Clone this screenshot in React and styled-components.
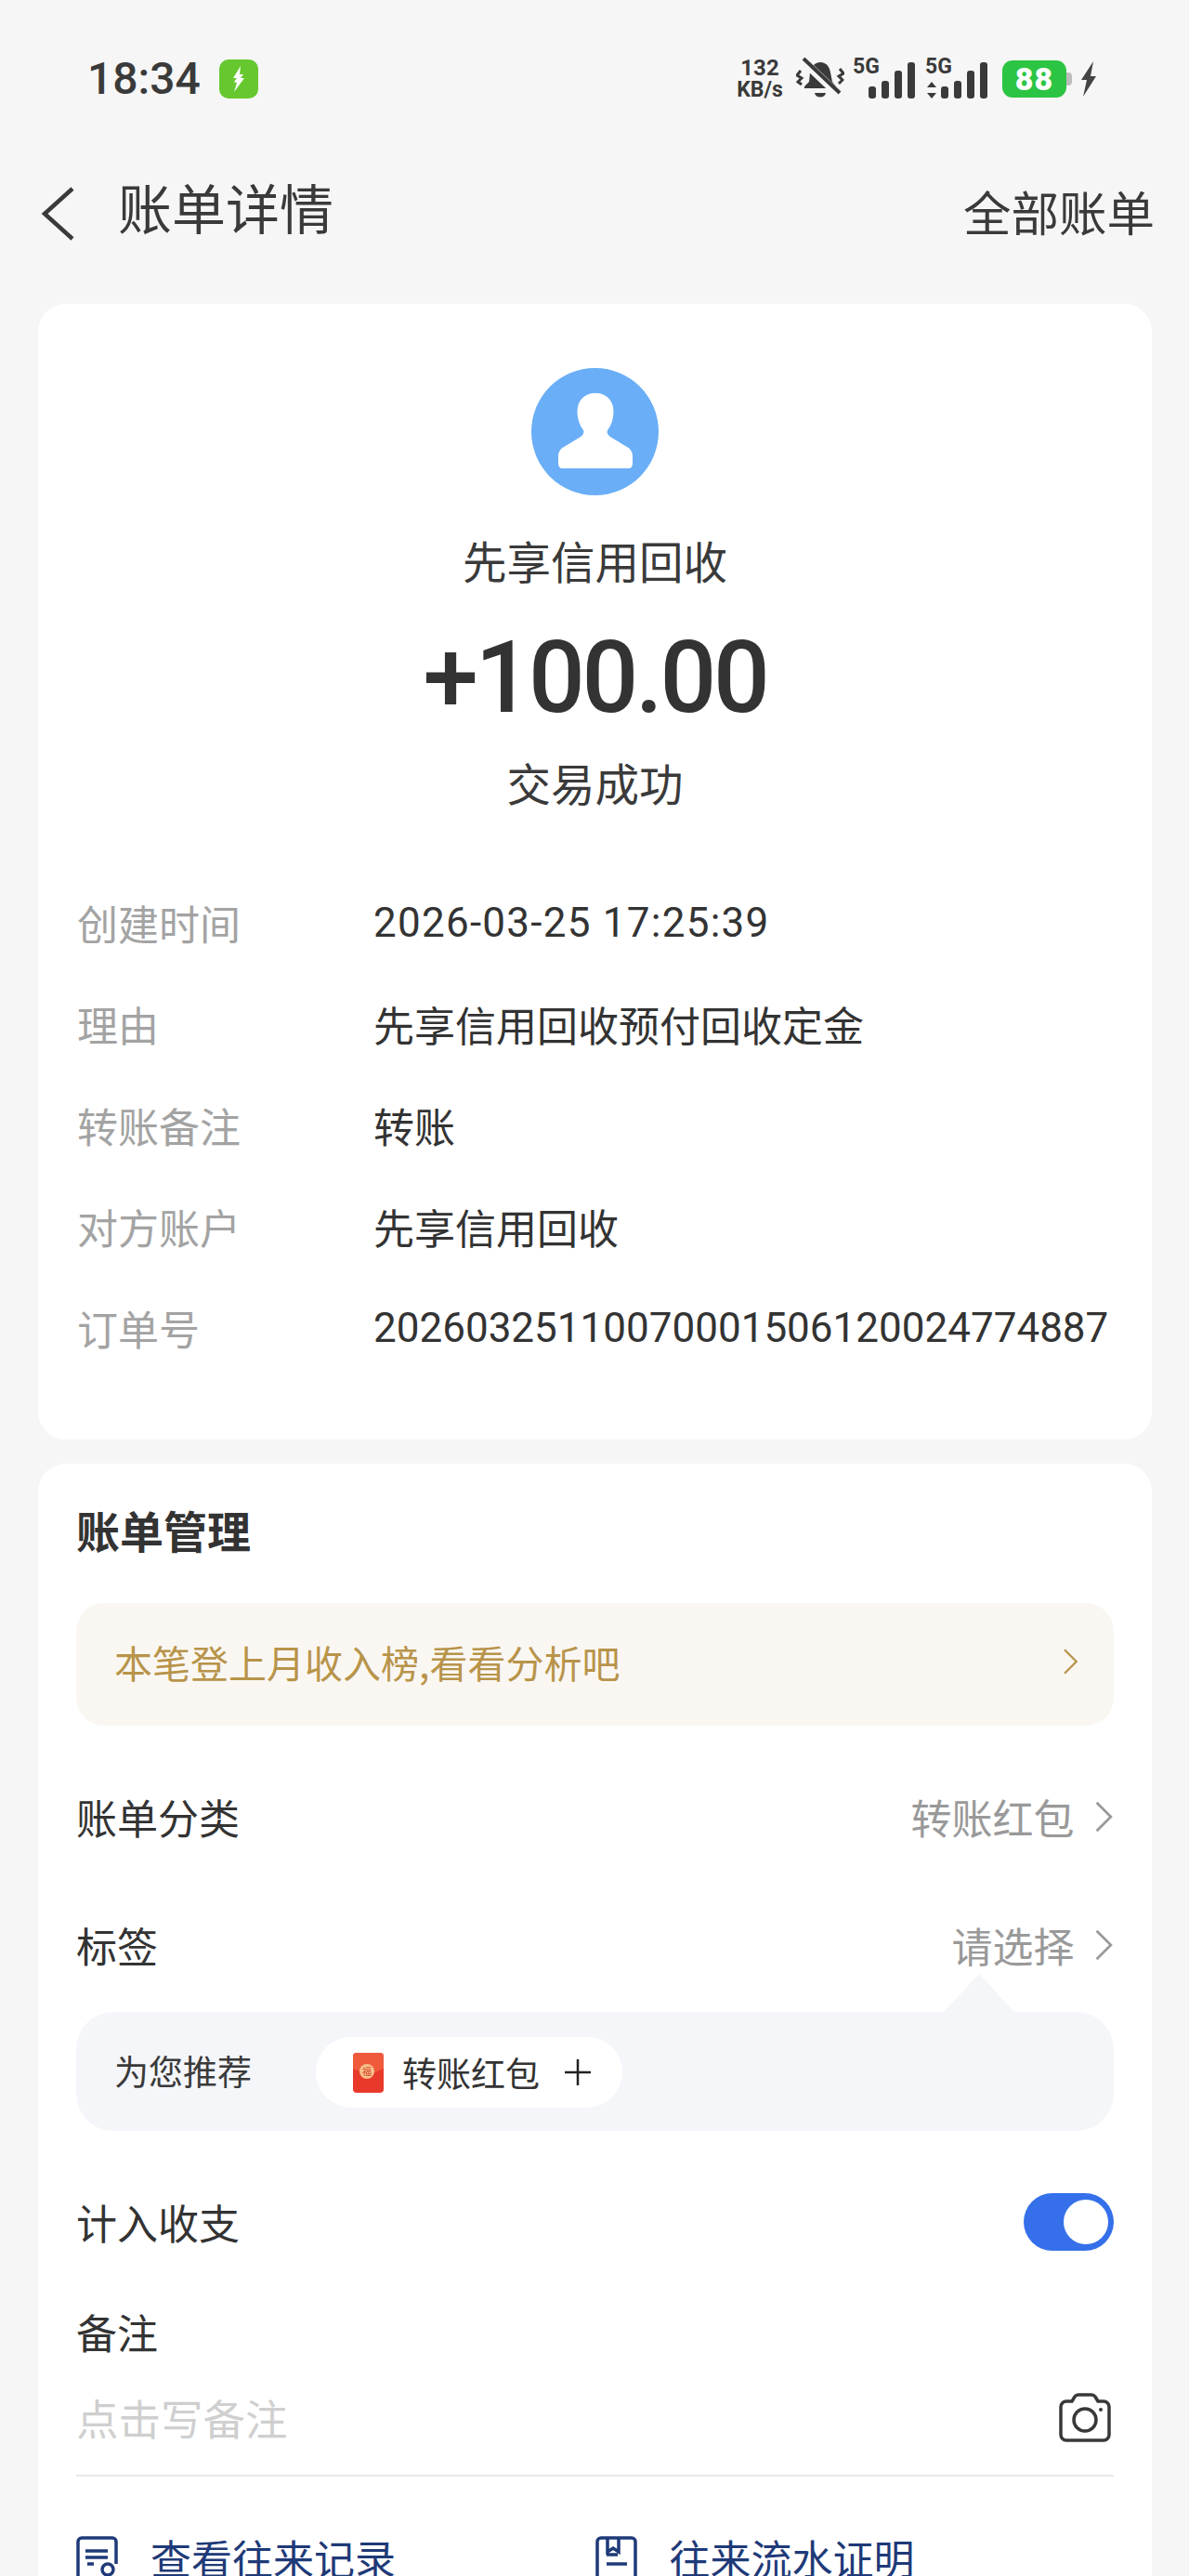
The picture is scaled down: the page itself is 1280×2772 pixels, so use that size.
import React from "react";
import styled, { createGlobalStyle } from "styled-components";

const GlobalStyle = createGlobalStyle`
    html, body {
        margin: 0;
        padding: 0;
        background: #f6f6f6;
    }
    * {
        box-sizing: border-box;
    }
`;

const CJK = `"Noto Sans CJK SC", sans-serif`;
const NUM = `Roboto, "Noto Sans CJK SC", sans-serif`;

// whole phone screen
const Page = styled.div`
    width: 1280px;
    height: 2772px;
    overflow: hidden;
    background: #f6f6f6;
    font-family: ${CJK};
    color: #333;
`;

// status bar
const StatusBar = styled.div`
    height: 170px;
    display: flex;
    align-items: center;
    justify-content: space-between;
    padding: 0 99px 0 94px;
`;

const StatusLeft = styled.div`
    display: flex;
    align-items: center;
    gap: 20px;
`;

const Clock = styled.div`
    font-family: ${NUM};
    font-size: 48px;
    font-weight: 500;
    line-height: 48px;
    color: #3a3a3a;
`;

const ChargeBadge = styled.div`
    width: 42px;
    height: 42px;
    border-radius: 10px;
    background: #66c82e;
    display: flex;
    align-items: center;
    justify-content: center;
`;

const StatusRight = styled.div`
    display: flex;
    align-items: center;
`;

const Speed = styled.div`
    width: 52px;
    margin-right: 13px;
    font-family: ${NUM};
    font-weight: 700;
    color: #3a3a3a;
    text-align: center;
    line-height: 23px;
    font-size: 23px;

    div:first-child {
        font-size: 24px;
    }
`;

const SignalBox = styled.div`
    position: relative;
    width: 67px;
    height: 46px;
    margin-left: ${(p) => p.$left}px;
`;

const FiveG = styled.span`
    position: absolute;
    top: 0;
    left: 0;
    font-family: ${NUM};
    font-weight: 700;
    font-size: 23px;
    line-height: 20px;
    color: #3a3a3a;
`;

const BarsSvg = styled.svg`
    position: absolute;
    left: 0;
    top: 0;
`;

const Battery = styled.div`
    width: 69px;
    height: 40px;
    margin-left: 16px;
    border-radius: 11px;
    background: #2cc443;
    color: #fff;
    font-family: ${NUM};
    font-weight: 900;
    font-size: 34px;
    line-height: 40px;
    text-align: center;
    letter-spacing: 1px;
`;

const BatteryNub = styled.div`
    width: 6px;
    height: 14px;
    border-radius: 0 4px 4px 0;
    background: #bdbdbd;
`;

const BoltSvg = styled.svg`
    margin-left: 9px;
`;

// title bar
const NavBar = styled.div`
    height: 110px;
    display: flex;
    align-items: center;
    justify-content: space-between;
    padding: 0 37px 0 44px;
`;

const NavLeft = styled.div`
    display: flex;
    align-items: center;
    gap: 47px;
`;

const BackSvg = styled.svg`
    margin-top: 9px;
`;

const NavTitle = styled.div`
    font-size: 58px;
    line-height: 70px;
    margin-bottom: 6px;
    color: #3a3a3a;
`;

const NavLink = styled.div`
    font-size: 51.5px;
    line-height: 60px;
    margin-top: 4px;
    color: #3a3a3a;
`;

const Card = styled.div`
    margin: ${(p) => p.$top}px 40px 0 41px;
    background: #fff;
    border-radius: 30px;
`;

const SummaryCard = styled(Card)`
    height: 1222px;
    padding-top: 69px;
    display: flex;
    flex-direction: column;
`;

const Avatar = styled.div`
    align-self: center;
    width: 137px;
    height: 137px;
    border-radius: 50%;
    background: #6aaef7;
    display: flex;
    align-items: center;
    justify-content: center;
`;

const Center = styled.div`
    text-align: center;
    font-size: 47.5px;
    line-height: 60px;
    color: #3a3a3a;
    margin-top: ${(p) => p.$top}px;
`;

const Amount = styled.div`
    text-align: center;
    font-family: ${NUM};
    font-weight: 500;
    font-size: 107px;
    line-height: 120px;
    letter-spacing: -3.3px;
    margin-top: 37px;
    color: #333;
`;

const DetailList = styled.div`
    margin-top: 66px;
    padding: 0 42px;
    display: flex;
    flex-direction: column;
`;

const DetailRow = styled.div`
    height: 109px;
    display: flex;
    align-items: center;
`;

const DetailLabel = styled.div`
    width: 319px;
    flex: none;
    font-size: 44px;
    color: #a3a3a3;
`;

const DetailValue = styled.div`
    font-family: ${NUM};
    font-size: 44px;
    letter-spacing: ${(p) => (p.$wide ? "1.25px" : "0")};
    color: #333;
    white-space: nowrap;
`;

const ManageCard = styled(Card)`
    padding: 0 41px;
    height: 1300px;
`;

const ManageTitle = styled.div`
    height: 150px;
    padding-bottom: 10px;
    display: flex;
    align-items: center;
    font-size: 47px;
    font-weight: 700;
    color: #333;
`;

const Banner = styled.div`
    height: 132px;
    padding: 0 38px 6px 41px;
    border-radius: 30px;
    background: #faf7f3;
    display: flex;
    align-items: center;
    justify-content: space-between;
    font-size: 41px;
    color: #b8944a;
`;

const Row = styled.div`
    height: ${(p) => p.$height}px;
    margin-top: ${(p) => p.$top || 0}px;
    display: flex;
    align-items: center;
    justify-content: space-between;
    font-size: 44px;
    color: #333;
`;

const RowValue = styled.div`
    display: flex;
    align-items: center;
    gap: 21px;
    color: #999;
`;

const SuggestPanel = styled.div`
    position: relative;
    height: 128px;
    margin-top: 32px;
    padding: 0 0 3px 41px;
    border-radius: 40px;
    background: #f5f6fa;
    display: flex;
    align-items: center;
    gap: 69px;
    font-size: 37px;
    color: #3a3a3a;

    &::before {
        content: "";
        position: absolute;
        top: -41px;
        left: 934px;
        border: 38px solid transparent;
        border-top: 0;
        border-bottom: 41px solid #f5f6fa;
    }
`;

const SuggestChip = styled.div`
    height: 76px;
    width: 330px;
    margin-top: 5px;
    border-radius: 38px;
    background: #fff;
    display: flex;
    align-items: center;
    padding-left: 40px;
    color: #333;
`;

const ChipText = styled.span`
    margin: 0 27px 0 20px;
`;

const Toggle = styled.div`
    width: 97px;
    height: 62px;
    border-radius: 31px;
    background: #3570ea;
    display: flex;
    align-items: center;
    justify-content: flex-end;
    padding-right: 6px;
`;

const ToggleThumb = styled.div`
    width: 48px;
    height: 48px;
    border-radius: 50%;
    background: #fff;
`;

const NoteLabel = styled.div`
    height: 60px;
    margin-top: 57px;
    display: flex;
    align-items: center;
    font-size: 44px;
    color: #333;
`;

const NoteInput = styled.div`
    height: 126px;
    display: flex;
    align-items: center;
    justify-content: space-between;
    padding-right: 3px;
    border-bottom: 2px solid #e9e9e9;
    font-size: 45.5px;
    color: #cfcfcf;
`;

const Links = styled.div`
    display: flex;
    padding-top: 59px;
`;

const LinkItem = styled.div`
    width: 559px;
    display: flex;
    align-items: flex-start;
    gap: 35px;
    font-size: 44px;
    line-height: 56px;
    color: #1f3a78;
`;

const LinkIcon = styled.svg`
    flex: none;
    margin-top: 5px;
`;

const Chevron = ({ size = 36, color = "#999" }) => (
    <svg width={size * 0.6} height={size} viewBox="0 0 12 20" fill="none">
        <path d="M2 1.5 10.5 10 2 18.5" stroke={color} strokeWidth="1.5" />
    </svg>
);

const SignalBars = ({ arrows }) => (
    <BarsSvg width="67" height="46" viewBox="0 0 67 46">
        {arrows && <path d="M7 26 12 32H2ZM7 44 2 38H12Z" fill="#3a3a3a" />}
        <rect x="17" y="31" width="8" height="13" rx="3" fill="#3a3a3a" />
        <rect x="31" y="25" width="8" height="19" rx="3" fill="#3a3a3a" />
        <rect x="45" y="14" width="8" height="30" rx="3" fill="#3a3a3a" />
        <rect x="59" y="5" width="8" height="39" rx="3" fill="#3a3a3a" />
    </BarsSvg>
);

const details = [
    { label: "创建时间", value: "2026-03-25 17:25:39", wide: true },
    { label: "理由", value: "先享信用回收预付回收定金" },
    { label: "转账备注", value: "转账" },
    { label: "对方账户", value: "先享信用回收" },
    { label: "订单号", value: "20260325110070001506120024774887" },
];

export default function App() {
    return (
        <Page>
            <GlobalStyle />
            <StatusBar>
                <StatusLeft>
                    <Clock>18:34</Clock>
                    <ChargeBadge>
                        <svg width="16" height="28" viewBox="0 0 16 28">
                            <path d="M10 0 2 13h4L3 17l-1 0 4 1-3 10 11-15h-4l3-4H9z" fill="#fff" />
                        </svg>
                    </ChargeBadge>
                </StatusLeft>
                <StatusRight>
                    <Speed>
                        <div>132</div>
                        <div>KB/s</div>
                    </Speed>
                    <svg width="52" height="46" viewBox="0 0 52 46">
                        <path d="M26 5c7 0 10 5 11 11l2 10 4 5v2H9v-2l5-5 1-10c1-6 5-11 11-11z" fill="#3a3a3a" />
                        <path d="M20 38h12c-1 6-11 6-12 0z" fill="#3a3a3a" />
                        <path d="M7 3 46 40" stroke="#f6f6f6" strokeWidth="9" />
                        <path d="M8 1 47 38" stroke="#3a3a3a" strokeWidth="4" />
                        <path d="M5 14 1 19l5 3-4 4 4 3M47 12l4 5-5 3 4 4-4 4" stroke="#3a3a3a" strokeWidth="3" fill="none" />
                    </svg>
                    <SignalBox $left={9}>
                        <FiveG>5G</FiveG>
                        <SignalBars />
                    </SignalBox>
                    <SignalBox $left={11}>
                        <FiveG>5G</FiveG>
                        <SignalBars arrows />
                    </SignalBox>
                    <Battery>88</Battery>
                    <BatteryNub />
                    <BoltSvg width="18" height="38" viewBox="0 0 18 38">
                        <path d="M14 0 1 20h6L3 38l14-22h-6z" fill="#444" />
                    </BoltSvg>
                </StatusRight>
            </StatusBar>

            <NavBar>
                <NavLeft>
                    <BackSvg width="36" height="58" viewBox="0 0 36 58" fill="none">
                        <path d="M34 2 4 29l30 27" stroke="#3a3a3a" strokeWidth="4.5" />
                    </BackSvg>
                    <NavTitle>账单详情</NavTitle>
                </NavLeft>
                <NavLink>全部账单</NavLink>
            </NavBar>

            <SummaryCard $top={47}>
                <Avatar>
                    <svg width="80" height="84" viewBox="0 0 80 84">
                        <path
                            d="M40 0C52 0 59.5 8 59.5 20 59.5 29 56 36 53 40 52 42 53 45 56 47L74 58C78 60 80 64 80 68V76C80 79 78 81 76 81H4C2 81 0 79 0 76V68C0 64 2 60 6 58L24 47C27 45 28 42 27 40 24 36 20.5 29 20.5 20 20.5 8 28 0 40 0Z"
                            fill="#fff"
                        />
                    </svg>
                </Avatar>
                <Center $top={40}>先享信用回收</Center>
                <Amount>+100.00</Amount>
                <Center $top={22}>交易成功</Center>
                <DetailList>
                    {details.map((d) => (
                        <DetailRow key={d.label}>
                            <DetailLabel>{d.label}</DetailLabel>
                            <DetailValue $wide={d.wide}>{d.value}</DetailValue>
                        </DetailRow>
                    ))}
                </DetailList>
            </SummaryCard>

            <ManageCard $top={26}>
                <ManageTitle>账单管理</ManageTitle>
                <Banner>
                    <span>本笔登上月收入榜,看看分析吧</span>
                    <Chevron size={30} color="#b8944a" />
                </Banner>
                <Row $height={196}>
                    <span>账单分类</span>
                    <RowValue>
                        转账红包
                        <Chevron />
                    </RowValue>
                </Row>
                <Row $height={80}>
                    <span>标签</span>
                    <RowValue>
                        请选择
                        <Chevron />
                    </RowValue>
                </Row>
                <SuggestPanel>
                    <span>为您推荐</span>
                    <SuggestChip>
                        <svg width="33" height="43" viewBox="0 0 33 43">
                            <rect width="33" height="43" rx="4" fill="#e8392b" />
                            <path d="M0 4a4 4 0 0 1 4-4h25a4 4 0 0 1 4 4v13L17 24 0 17z" fill="#ef5a3c" />
                            <circle cx="15" cy="20" r="8" fill="#f6c08a" />
                            <text x="15" y="24" fontSize="10" textAnchor="middle" fill="#d8432c" fontFamily={CJK}>
                                福
                            </text>
                        </svg>
                        <ChipText>转账红包</ChipText>
                        <svg width="28" height="28" viewBox="0 0 28 28">
                            <path d="M14 0v28M0 14h28" stroke="#222" strokeWidth="2.5" />
                        </svg>
                    </SuggestChip>
                </SuggestPanel>
                <Row $height={62} $top={67}>
                    <span>计入收支</span>
                    <Toggle>
                        <ToggleThumb />
                    </Toggle>
                </Row>
                <NoteLabel>备注</NoteLabel>
                <NoteInput>
                    <span>点击写备注</span>
                    <svg width="56" height="53" viewBox="0 0 56 53" fill="none">
                        <path
                            d="M2 15a6 6 0 0 1 6-6h6l3-5a5 5 0 0 1 4-2h14a5 5 0 0 1 4 2l3 5h6a6 6 0 0 1 6 6v30a6 6 0 0 1-6 6H8a6 6 0 0 1-6-6z"
                            stroke="#383838"
                            strokeWidth="3.5"
                            strokeLinejoin="round"
                        />
                        <circle cx="28" cy="29" r="12" stroke="#383838" strokeWidth="3.5" />
                        <circle cx="45" cy="18" r="2" fill="#383838" />
                    </svg>
                </NoteInput>
                <Links>
                    <LinkItem>
                        <LinkIcon width="45" height="56" viewBox="0 0 45 56" fill="none">
                            <path d="M24 54H6a4 4 0 0 1-4-4V6a4 4 0 0 1 4-4h33a4 4 0 0 1 4 4v24" stroke="#1f3a78" strokeWidth="3.5" />
                            <path d="M10 16h24M10 23h24M12 30h7" stroke="#1f3a78" strokeWidth="3.5" />
                            <circle cx="34" cy="36" r="6" stroke="#1f3a78" strokeWidth="3.5" />
                        </LinkIcon>
                        查看往来记录
                    </LinkItem>
                    <LinkItem>
                        <LinkIcon width="45" height="56" viewBox="0 0 45 56" fill="none">
                            <rect x="2" y="2" width="41" height="56" rx="4" stroke="#1f3a78" strokeWidth="3.5" />
                            <path d="M13 2v15l6-4 6 4V2M12 20h12M12 30h22" stroke="#1f3a78" strokeWidth="3.5" />
                        </LinkIcon>
                        往来流水证明
                    </LinkItem>
                </Links>
            </ManageCard>
        </Page>
    );
}
